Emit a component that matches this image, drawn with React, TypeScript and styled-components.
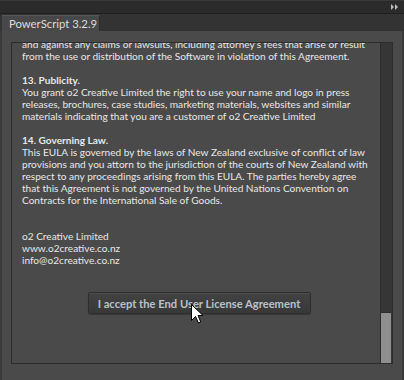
import React from "react";
import styled, { createGlobalStyle } from "styled-components";

const Global = createGlobalStyle`
  html, body { margin: 0; padding: 0; background: #4a4a4a; overflow: hidden; }
  #root { width: 404px; height: 380px; }
`;

const Window = styled.div`
  position: relative;
  width: 404px;
  height: 380px;
  display: flex;
  flex-direction: column;
  box-sizing: border-box;
  background: #4a4a4a;
  font-family: "Lato", "Liberation Sans", sans-serif;
`;

const TopStrip = styled.div`
  height: 14px;
  flex: none;
  display: flex;
  justify-content: flex-end;
  align-items: center;
  padding-right: 5px;
  background: #2b2b2b;
  border-top: 1px solid #3a3a3a;
  border-bottom: 1px solid #1e1e1e;
  box-sizing: border-box;
`;

const CollapseIcon = styled.svg`
  width: 8px;
  height: 6px;
  display: block;
`;

const TabBar = styled.div`
  height: 17px;
  flex: none;
  display: flex;
  align-items: stretch;
  background: #333333;
  padding-left: 2px;
`;

const Tab = styled.div`
  width: 98px;
  margin-top: 1px;
  box-sizing: border-box;
  background: #484848;
  border-top: 1px solid #565656;
  border-right: 1px solid #2c2c2c;
  color: #dcdcdc;
  font-size: 11.3px;
  line-height: 15px;
  padding-left: 7px;
  white-space: nowrap;
`;

const Body = styled.div`
  flex: 1;
  display: flex;
  box-sizing: border-box;
  padding: 11px 9px 16px 9px;
  border-left: 2px solid #3a3a3a;
  border-right: 2px solid #3a3a3a;
`;

const LicenseBox = styled.div`
  flex: 1;
  display: flex;
  border: 1px solid #2c2c2c;
  background: #4a4a4a;
  min-height: 0;
`;

const ScrollArea = styled.div`
  flex: 1;
  overflow: hidden;
  padding-left: 10px;
`;

const ScrollContent = styled.div`
  margin-top: -5px;
  display: flex;
  flex-direction: column;
  align-items: flex-start;
`;

const Line = styled.div<{ $bold?: boolean }>`
  height: 12px;
  line-height: 12px;
  font-size: 10.1px;
  color: #e8e8e8;
  white-space: nowrap;
  font-weight: ${(p) => (p.$bold ? 700 : 400)};
`;

const ButtonRow = styled.div`
  align-self: stretch;
  display: flex;
  justify-content: center;
  padding-top: 26px;
  padding-right: 4px;
`;

const AcceptButton = styled.button`
  width: 223px;
  height: 22px;
  box-sizing: border-box;
  border: 1px solid #2e2e2e;
  border-radius: 2px;
  background: linear-gradient(#424242, #383838);
  box-shadow: inset 0 1px 0 #4e4e4e, 0 1px 1px rgba(0, 0, 0, 0.25);
  color: #b9c2ca;
  font-family: "Lato", "Liberation Sans", sans-serif;
  font-weight: 700;
  font-size: 11.2px;
  padding: 0;
`;

const Scrollbar = styled.div`
  width: 12px;
  flex: none;
  display: flex;
  flex-direction: column;
  justify-content: flex-end;
  background: #363636;
  border-left: 1px solid #2c2c2c;
  box-sizing: border-box;
  padding-right: 1px;
`;

const Thumb = styled.div`
  height: 50px;
  background: #8f8f8f;
  border-top: 1px solid #2c2c2c;
`;

const Cursor = styled.svg`
  position: absolute;
  left: 191px;
  top: 304px;
  width: 13px;
  height: 20px;
  pointer-events: none;
`;

const lines: { t: string; b?: boolean }[] = [
  { t: "and against any claims or lawsuits, including attorney\u2019s fees that arise or result" },
  { t: "from the use or distribution of the Software in violation of this Agreement." },
  { t: "" },
  { t: "13. Publicity.", b: true },
  { t: "You grant o2 Creative Limited the right to use your name and logo in press" },
  { t: "releases, brochures, case studies, marketing materials, websites and similar" },
  { t: "materials indicating that you are a customer of o2 Creative Limited" },
  { t: "" },
  { t: "14. Governing Law.", b: true },
  { t: "This EULA is governed by the laws of New Zealand exclusive of conflict of law" },
  { t: "provisions and you attorn to the jurisdiction of the courts of New Zealand with" },
  { t: "respect to any proceedings arising from this EULA. The parties hereby agree" },
  { t: "that this Agreement is not governed by the United Nations Convention on" },
  { t: "Contracts for the International Sale of Goods." },
  { t: "" },
  { t: "" },
  { t: "o2 Creative Limited" },
  { t: "www.o2creative.co.nz" },
  { t: "info@o2creative.co.nz" },
];

export default function App() {
  return (
    <Window>
      <Global />
      <TopStrip>
        <CollapseIcon viewBox="0 0 8 6">
          <polygon points="0,0 3,3 0,6" fill="#bdbdbd" />
          <polygon points="4,0 7,3 4,6" fill="#bdbdbd" />
        </CollapseIcon>
      </TopStrip>
      <TabBar>
        <Tab>PowerScript 3.2.9</Tab>
      </TabBar>
      <Body>
        <LicenseBox>
          <ScrollArea>
            <ScrollContent>
              {lines.map((l, i) => (
                <Line key={i} $bold={l.b}>
                  {l.t || "\u00a0"}
                </Line>
              ))}
              <ButtonRow>
                <AcceptButton>I accept the End User License Agreement</AcceptButton>
              </ButtonRow>
            </ScrollContent>
          </ScrollArea>
          <Scrollbar>
            <Thumb />
          </Scrollbar>
        </LicenseBox>
      </Body>
      <Cursor viewBox="0 0 13 20">
        <path
          d="M0.5 0.5 L0.5 16.5 L4.5 12.5 L7.5 19 L9.8 18 L7 11.5 L12 11.5 Z"
          fill="#ffffff"
          stroke="#000000"
          strokeWidth="1"
        />
      </Cursor>
    </Window>
  );
}
